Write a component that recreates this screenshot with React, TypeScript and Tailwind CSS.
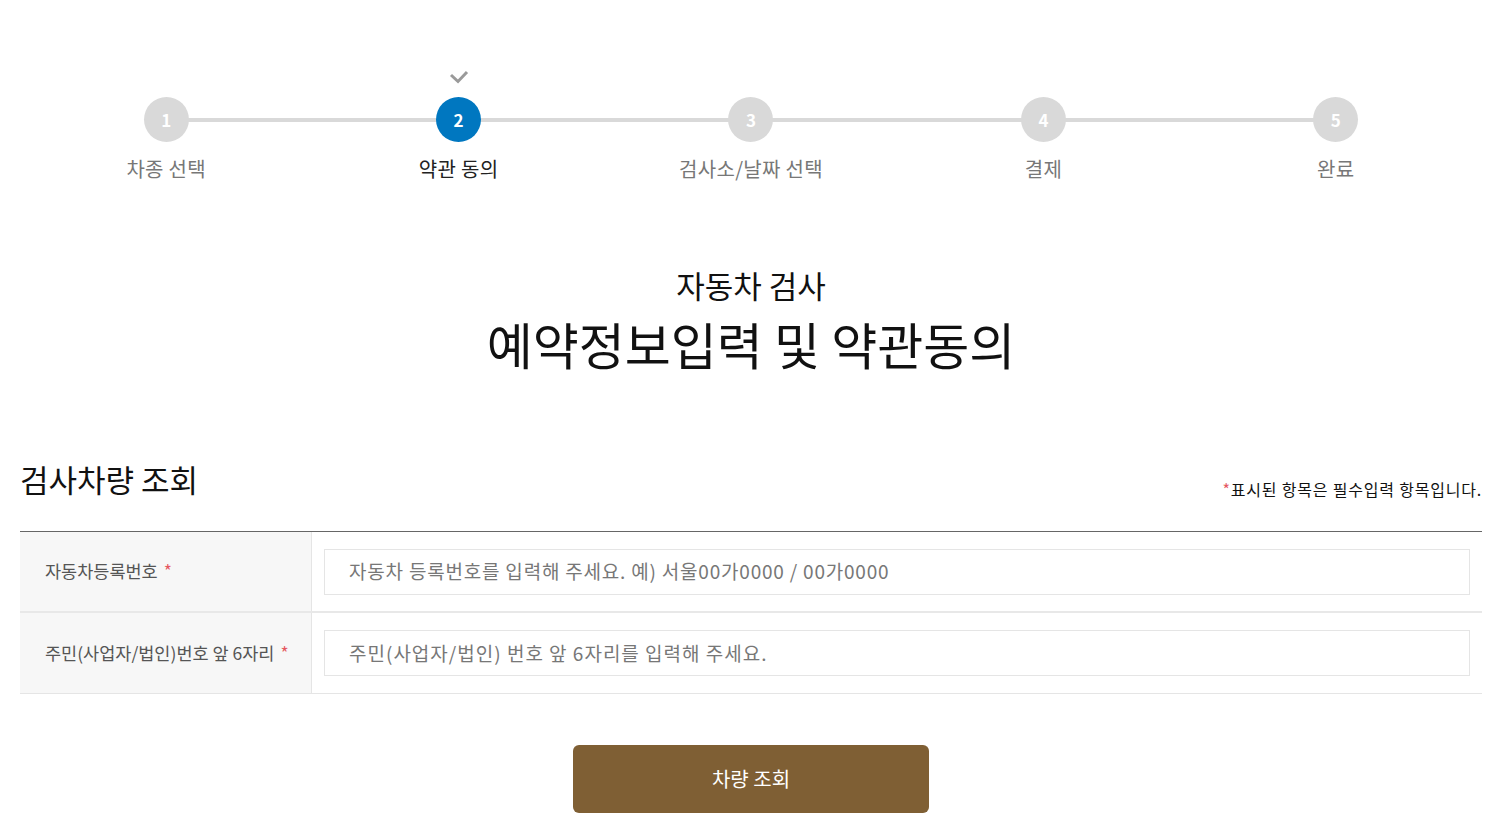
import React from "react";

const steps = ["차종 선택", "약관 동의", "검사소/날짜 선택", "결제", "완료"];

export default function App() {
  return (
    <div
      className="w-[1498px] min-h-[829px] bg-white overflow-hidden"
      style={{ fontFamily: '"Noto Sans CJK KR", "Noto Sans", sans-serif' }}
    >
      <div className="pl-[20px] pr-[16px]">
        {/* Stepper */}
        <div className="relative pt-[68px]">
          <div className="absolute left-[146px] right-[146px] top-[118px] h-[4px] bg-[#d9d9d9]" />
          <div className="relative grid grid-cols-5">
            {steps.map((s, i) => {
              const active = i === 1;
              return (
                <div key={s} className="flex flex-col items-center">
                  <div className="h-[18px] flex items-center justify-center">
                    {active && (
                      <svg width="20" height="14" viewBox="0 0 20 14">
                        <path d="M2 5 L9 11.5 L18 2" fill="none" stroke="#9a9a9a" strokeWidth="3" />
                      </svg>
                    )}
                  </div>
                  <div
                    className={`mt-[11px] w-[45px] h-[45px] rounded-full flex items-center justify-center text-[17px] font-bold text-white ${
                      active ? "bg-[#0077c0]" : "bg-[#d9d9d9]"
                    }`}
                  >
                    {i + 1}
                  </div>
                  <div
                    className={`mt-[13px] text-[20px] leading-[28px] tracking-[0.3px] ${
                      active ? "text-[#222]" : "text-[#777]"
                    }`}
                  >
                    {s}
                  </div>
                </div>
              );
            })}
          </div>
        </div>

        {/* Title */}
        <div className="mt-[82px] flex flex-col items-center text-[#111]">
          <div className="text-[31px] leading-[40px]">자동차 검사</div>
          <div className="mt-[6px] text-[50px] leading-[64px]">예약정보입력 및 약관동의</div>
        </div>

        {/* Section header */}
        <div className="mt-[82px] flex items-end justify-between">
          <div className="text-[31px] leading-[44px] text-[#111]">검사차량 조회</div>
          <div className="text-[16px] leading-[22px] tracking-[0.8px] text-[#111] mb-[1px]">
            <span className="text-[#e5575f]">*</span>표시된 항목은 필수입력 항목입니다.
          </div>
        </div>

        {/* Table */}
        <div className="mt-[30px] border-t border-[#666]">
          <div className="flex h-[81px] border-b-2 border-[#e8e8e8]">
            <div className="w-[292px] bg-[#f7f7f7] border-r border-[#e5e5e5] flex items-center pl-[25px] text-[17.5px] text-[#555]">
              자동차등록번호<span className="ml-[6px] text-[#e5575f]">*</span>
            </div>
            <div className="flex-1 flex items-center px-[12px]">
              <div className="w-full h-[46px] border border-[#e5e5e5] flex items-center pl-[24px] text-[19px] tracking-[0.8px] text-[#777]">
                자동차 등록번호를 입력해 주세요. 예) 서울00가0000 / 00가0000
              </div>
            </div>
          </div>
          <div className="flex h-[81px] border-b border-[#e5e5e5]">
            <div className="w-[292px] bg-[#f7f7f7] border-r border-[#e5e5e5] flex items-center pl-[25px] text-[17.5px] text-[#555]">
              주민(사업자/법인)번호 앞 6자리<span className="ml-[6px] text-[#e5575f]">*</span>
            </div>
            <div className="flex-1 flex items-center px-[12px]">
              <div className="w-full h-[46px] border border-[#e5e5e5] flex items-center pl-[24px] text-[19px] tracking-[1px] text-[#777]">
                주민(사업자/법인) 번호 앞 6자리를 입력해 주세요.
              </div>
            </div>
          </div>
        </div>

        {/* Button */}
        <div className="mt-[51px] flex justify-center">
          <button className="w-[356px] h-[68px] rounded-[6px] bg-[#7f5f34] text-white text-[20px]">
            차량 조회
          </button>
        </div>
      </div>
    </div>
  );
}
